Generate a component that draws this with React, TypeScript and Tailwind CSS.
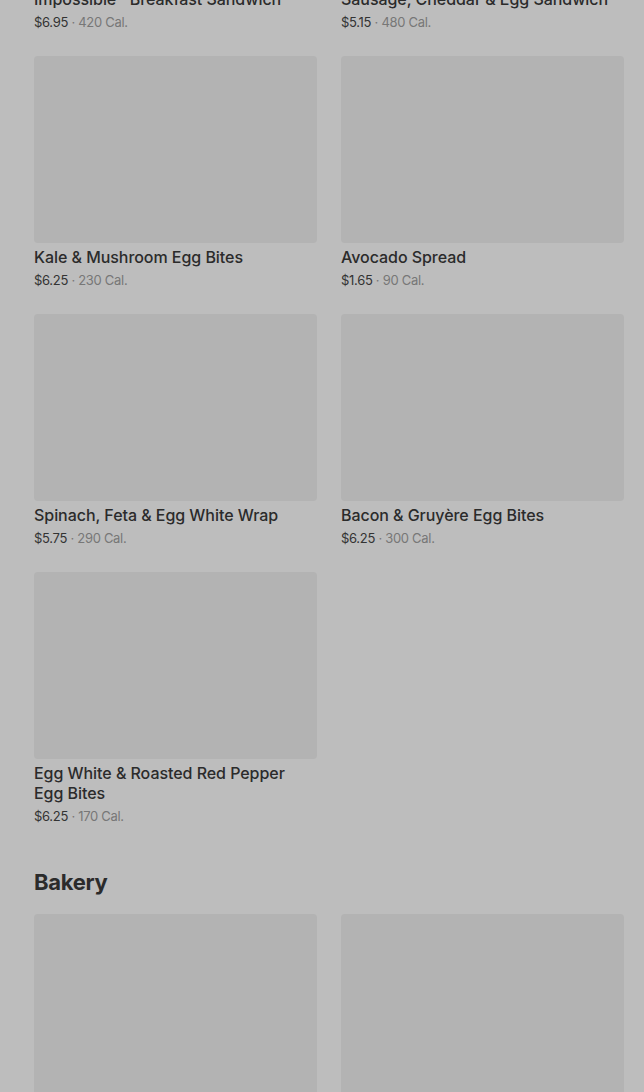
import React from "react";

type Item = { name: string; price: string; cal: string };

const breakfast: Item[] = [
  { name: "Impossible™ Breakfast Sandwich", price: "$6.95", cal: "420 Cal." },
  { name: "Sausage, Cheddar & Egg Sandwich", price: "$5.15", cal: "480 Cal." },
  { name: "Kale & Mushroom Egg Bites", price: "$6.25", cal: "230 Cal." },
  { name: "Avocado Spread", price: "$1.65", cal: "90 Cal." },
  { name: "Spinach, Feta & Egg White Wrap", price: "$5.75", cal: "290 Cal." },
  { name: "Bacon & Gruyère Egg Bites", price: "$6.25", cal: "300 Cal." },
  { name: "Egg White & Roasted Red Pepper Egg Bites", price: "$6.25", cal: "170 Cal." },
];

function Card({ item }: { item: Item }) {
  return (
    <div className="flex flex-col">
      <div className="h-[187px] w-full rounded-[4px] bg-[#b3b3b3]" />
      <div className="mt-[4px] text-[16px] leading-[20px] font-medium text-[#2b2b2b] tracking-[-0.05px]">
        {item.name}
      </div>
      <div className="mt-[3px] text-[13px] leading-[20px] text-[#333333] tracking-[-0.3px]">
        {item.price}
        <span className="text-[#777777]"> · {item.cal}</span>
      </div>
    </div>
  );
}

export default function App() {
  return (
    <div
      className="w-[644px] h-[1092px] overflow-hidden bg-[#bdbdbd]"
      style={{ fontFamily: "Inter, 'Noto Sans', sans-serif" }}
    >
      <div className="pl-[34px] pr-[20px] mt-[-202px]">
        <div className="grid grid-cols-[283px_283px] gap-x-[24px] gap-y-[24px]">
          {breakfast.map((it) => (
            <Card key={it.name} item={it} />
          ))}
        </div>
        <h2 className="mt-[40px] text-[22px] leading-[32px] font-bold text-[#2b2b2b] tracking-[-0.3px]">
          Bakery
        </h2>
        <div className="mt-[16px] grid grid-cols-[283px_283px] gap-x-[24px]">
          <div className="h-[187px] rounded-[4px] bg-[#b3b3b3]" />
          <div className="h-[187px] rounded-[4px] bg-[#b3b3b3]" />
        </div>
      </div>
    </div>
  );
}
